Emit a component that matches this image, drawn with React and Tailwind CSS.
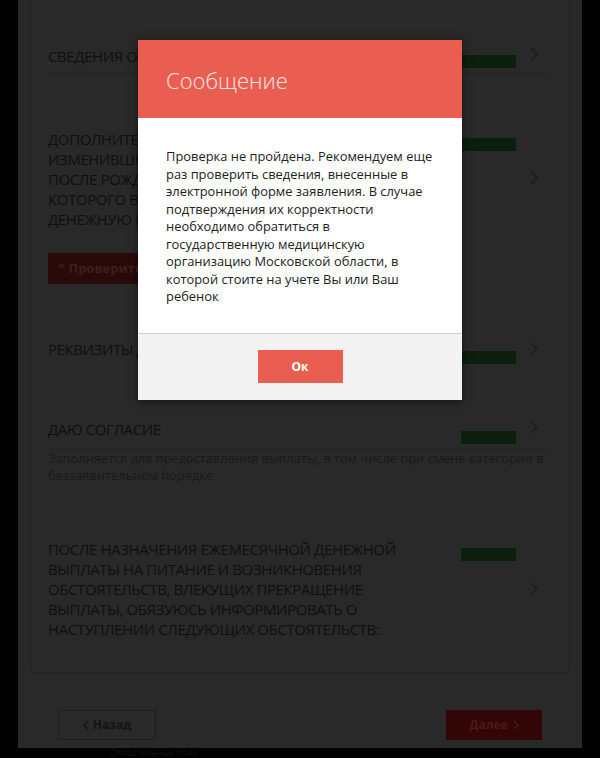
import React from 'react'

const font = { fontFamily: '"Open Sans", "Noto Sans", sans-serif' }

function Chevron() {
  return (
    <svg width="8" height="14" viewBox="0 0 8 14">
      <path d="M1 1l6 6-6 6" fill="none" stroke="#1a1a1a" strokeWidth="1.3" />
    </svg>
  )
}

function Badge() {
  return <div className="w-[55px] h-[13px] bg-[#0b200c]" />
}

function Section({ lines, badgeTop = 0, chevronTop = 0, children, line = false }) {
  return (
    <div>
      <div className="flex">
        <div className="w-[370px] text-[15px] leading-[20px] text-[#0f0f0f] uppercase tracking-[-0.4px]">
          {lines.map((l, i) => (
            <div key={i}>{l}</div>
          ))}
        </div>
        <div className="ml-auto flex items-start gap-[14px] pr-[11px]">
          <div style={{ marginTop: badgeTop }}>
            <Badge />
          </div>
          <div style={{ marginTop: chevronTop }}>
            <Chevron />
          </div>
        </div>
      </div>
      {line && <div className="mt-[4px] h-px bg-[#242424]" />}
      {children}
    </div>
  )
}

export default function App() {
  return (
    <div className="relative w-[600px] h-[758px] bg-black overflow-hidden" style={font}>
      <div className="mx-auto w-[564px] h-[748px] bg-[#292929] flex flex-col">
        <div className="mx-[12px] h-[673px] border-x border-b border-[#232323] rounded-b-[4px] pl-[17px] pr-[20px] pt-[46px]">
          <Section lines={['Сведения о заявителе']} badgeTop={9} chevronTop={1} line />

          <div className="mt-[56px]">
            <Section
              lines={[
                'Дополнительные сведения о',
                'изменившемся порядке',
                'после рождения ребенка,',
                'которого вы хотите получать',
                'денежную выплату',
              ]}
              badgeTop={9}
              chevronTop={42}
            />
          </div>

          <div className="mt-[24px] w-[320px] h-[31px] bg-[#2a0909] flex items-center pl-[10px] text-[13px] font-bold text-[#3e1f1f]">
            * Проверить сведения
          </div>

          <div className="mt-[55px]">
            <Section lines={['Реквизиты для перечисления']} badgeTop={12} chevronTop={3} />
          </div>

          <div className="mt-[55px]">
            <Section lines={['Даю согласие']} badgeTop={12} chevronTop={1} line>
              <div className="mt-[1px] text-[12.8px] leading-[17px] text-[#191919]">
                Заполняется для предоставления выплаты, в том числе при смене категории в беззаявительном порядке
              </div>
            </Section>
          </div>

          <div className="mt-[55px]">
            <Section
              lines={[
                'После назначения ежемесячной денежной',
                'выплаты на питание и возникновения',
                'обстоятельств, влекущих прекращение',
                'выплаты, обязуюсь информировать о',
                'наступлении следующих обстоятельств:',
              ]}
              badgeTop={9}
              chevronTop={43}
            />
          </div>
        </div>

        <div className="flex-1 flex items-start justify-between pl-[40px] pr-[40px] pt-[37px]">
          <div className="w-[98px] h-[30px] border border-[#1d1d1d] flex items-center justify-center gap-[4px] text-[12px] font-bold text-[#141414]">
            <svg width="6" height="10" viewBox="0 0 6 10">
              <path d="M5 1L1 5l4 4" fill="none" stroke="#141414" strokeWidth="1.4" />
            </svg>
            Назад
          </div>
          <div className="w-[96px] h-[30px] bg-[#320606] flex items-center justify-center gap-[5px] text-[12px] font-bold text-[#4e1818]">
            Далее
            <svg width="6" height="10" viewBox="0 0 6 10">
              <path d="M1 1l4 4-4 4" fill="none" stroke="#4e1818" strokeWidth="1.4" />
            </svg>
          </div>
        </div>
      </div>
      <div className="pl-[110px] text-[9px] leading-[10px] text-[#141414]">Обязательные поля</div>

      <div className="absolute inset-0 flex justify-center pt-[40px]">
        <div className="w-[324px] h-fit bg-white shadow-[0_2px_8px_rgba(0,0,0,0.5)]">
          <div className="h-[78px] bg-[#e95e50] flex items-center pl-[28px] pt-[2px]">
            <span className="text-[22px] font-light text-[#fde9e5]">Сообщение</span>
          </div>
          <div className="pl-[28px] pr-[24px] pt-[30px] pb-[27px] text-[12.9px] leading-[17.5px] text-[#222]">
            Проверка не пройдена. Рекомендуем еще раз проверить сведения, внесенные в электронной форме заявления. В случае подтверждения их корректности необходимо обратиться в государственную медицинскую организацию Московской области, в которой стоите на учете Вы или Ваш ребенок
          </div>
          <div className="h-[67px] bg-[#f3f3f3] border-t border-[#cfcfcf] flex items-center justify-center">
            <div className="w-[85px] h-[33px] bg-[#e95e50] flex items-center justify-center text-[12px] font-bold text-white">
              Ок
            </div>
          </div>
        </div>
      </div>
    </div>
  )
}
